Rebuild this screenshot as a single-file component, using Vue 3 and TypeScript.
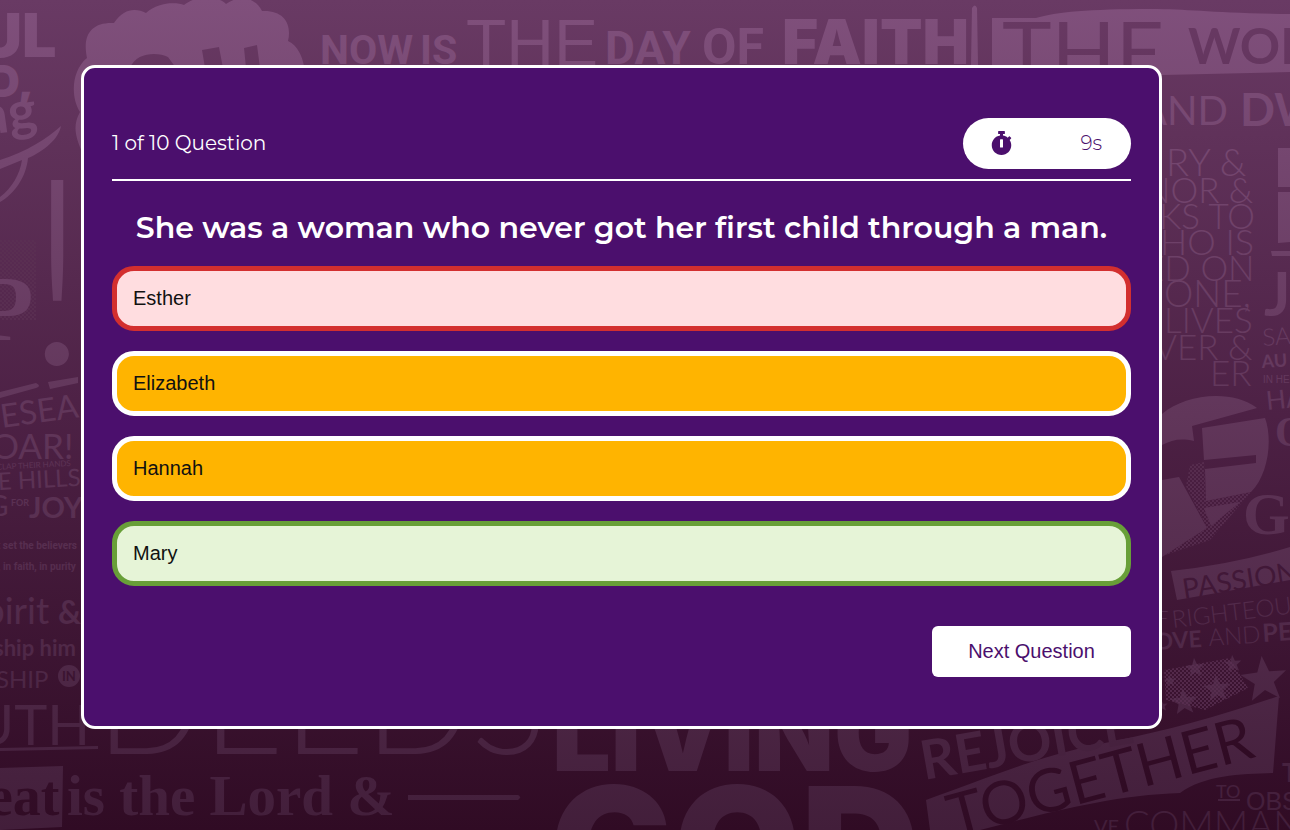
<script setup lang="ts">
import { ref } from 'vue'

type Face = 'sans' | 'heavy' | 'slab' | 'thin' | 'plain' | 'round' | 'black'

interface Word {
  text: string
  x: number
  y: number
  size: number
  face: Face
  turn?: number
  cut?: boolean
}

interface Option {
  label: string
  state: 'wrong' | 'idle' | 'right'
}

const options = ref<Option[]>([
  { label: 'Esther', state: 'wrong' },
  { label: 'Elizabeth', state: 'idle' },
  { label: 'Hannah', state: 'idle' },
  { label: 'Mary', state: 'right' },
])
const current = ref(1)
const total = 10
const seconds = ref(9)

const words: Word[] = [
  { text: 'UL', x: -22, y: 57, size: 61, face: 'black' },
  { text: 'D,', x: -12, y: 97, size: 44, face: 'black' },
  { text: 'ng', x: -20, y: 136, size: 54, face: 'round', turn: -8 },
  { text: 'NOW', x: 320, y: 64, size: 41, face: 'heavy' },
  { text: 'IS', x: 420, y: 64, size: 41, face: 'heavy' },
  { text: 'THE', x: 466, y: 66, size: 66, face: 'sans' },
  { text: 'DAY', x: 605, y: 64, size: 46, face: 'heavy' },
  { text: 'OF', x: 702, y: 64, size: 50, face: 'heavy' },
  { text: 'FAITH', x: 782, y: 64, size: 62, face: 'black' },
  { text: 'THE', x: 1002, y: 82, size: 84, face: 'plain', cut: true },
  { text: 'WORD', x: 1188, y: 64, size: 50, face: 'round', cut: true },
  { text: 'AND', x: 1140, y: 125, size: 40, face: 'plain' },
  { text: 'DW', x: 1240, y: 126, size: 46, face: 'round' },
  { text: 'RY &', x: 1166, y: 176, size: 38, face: 'thin' },
  { text: 'NOR &', x: 1144, y: 203, size: 35, face: 'thin' },
  { text: 'KS TO', x: 1159, y: 229, size: 35, face: 'thin' },
  { text: 'HO IS', x: 1160, y: 255, size: 36, face: 'thin' },
  { text: 'ED ON', x: 1144, y: 281, size: 35, face: 'thin' },
  { text: 'ONE,', x: 1164, y: 307, size: 37, face: 'thin' },
  { text: 'LIVES', x: 1164, y: 333, size: 35, face: 'thin' },
  { text: 'VER &', x: 1154, y: 360, size: 35, face: 'thin' },
  { text: 'ER', x: 1210, y: 386, size: 35, face: 'thin' },
  { text: 'JE', x: 1264, y: 316, size: 62, face: 'round' },
  { text: 'SA', x: 1263, y: 346, size: 24, face: 'thin', turn: -4 },
  { text: 'AU', x: 1262, y: 368, size: 18, face: 'round', turn: -4 },
  { text: 'IN HE', x: 1263, y: 383, size: 10, face: 'sans' },
  { text: 'HA', x: 1267, y: 410, size: 26, face: 'plain', turn: -6 },
  { text: 'O', x: 1275, y: 446, size: 42, face: 'slab' },
  { text: 'Go', x: 1243, y: 534, size: 60, face: 'slab' },
  { text: 'P', x: -24, y: 340, size: 94, face: 'slab' },
  { text: '!', x: 24, y: 364, size: 260, face: 'thin' },
  { text: 'ESEA', x: 2, y: 428, size: 33, face: 'plain', turn: -8 },
  { text: 'OAR!', x: -9, y: 459, size: 35, face: 'plain' },
  { text: 'HILLS CLAP THEIR HANDS', x: -26, y: 471, size: 8, face: 'plain', turn: -3 },
  { text: 'HE HILLS', x: -20, y: 491, size: 24, face: 'plain', turn: -3 },
  { text: 'G', x: -12, y: 516, size: 28, face: 'plain' },
  { text: 'FOR', x: 11, y: 506, size: 9, face: 'round' },
  { text: 'JOY', x: 29, y: 518, size: 29, face: 'round' },
  { text: 't set the believers', x: -3, y: 549, size: 10, face: 'heavy' },
  { text: ', in faith, in purity', x: -2, y: 570, size: 10, face: 'heavy' },
  { text: 'pirit', x: -16, y: 624, size: 37, face: 'plain' },
  { text: '&', x: 58, y: 624, size: 32, face: 'round' },
  { text: 'ship him', x: -6, y: 656, size: 22, face: 'round' },
  { text: 'SHIP', x: -4, y: 688, size: 24, face: 'plain' },
  { text: 'IN', x: 62, y: 681, size: 13, face: 'round', cut: true },
  { text: 'UTH', x: -27, y: 745, size: 56, face: 'plain' },
  { text: 'DEEDS', x: 96, y: 754, size: 140, face: 'thin' },
  { text: 'eat', x: -12, y: 815, size: 56, face: 'slab', cut: true },
  { text: 'is the Lord &', x: 67, y: 815, size: 57, face: 'slab' },
  { text: 'LIVING', x: 552, y: 771, size: 104, face: 'black' },
  { text: 'GOD', x: 550, y: 905, size: 164, face: 'black' },
  { text: 'REJOICE', x: 924, y: 780, size: 54, face: 'round', turn: -10 },
  { text: 'PASSION', x: 1184, y: 599, size: 28, face: 'plain', turn: -9, cut: true },
  { text: 'F', x: 1156, y: 626, size: 22, face: 'thin' },
  { text: 'RIGHTEOUS', x: 1173, y: 628, size: 24, face: 'thin', turn: -7 },
  { text: 'OVE', x: 1155, y: 650, size: 23, face: 'round', turn: -4 },
  { text: 'AND', x: 1209, y: 646, size: 24, face: 'thin', turn: -4 },
  { text: 'PEACE', x: 1263, y: 642, size: 25, face: 'round', turn: -4 },
  { text: 'TOGETHER', x: 954, y: 838, size: 60, face: 'plain', turn: -15, cut: true },
  { text: 'T', x: 1282, y: 782, size: 26, face: 'round' },
  { text: 'TO', x: 1216, y: 798, size: 18, face: 'plain' },
  { text: 'OBS', x: 1246, y: 810, size: 25, face: 'sans' },
  { text: 'VE', x: 1094, y: 834, size: 20, face: 'plain' },
  { text: 'COMMAND', x: 1124, y: 838, size: 38, face: 'thin' },
]

const stars = [
  { x: 1195, y: 668, r: 10 },
  { x: 1233, y: 664, r: 9 },
  { x: 1170, y: 681, r: 6 },
  { x: 1217, y: 689, r: 14 },
  { x: 1184, y: 702, r: 14 },
  { x: 1162, y: 706, r: 6 },
  { x: 1264, y: 680, r: 24 },
]

function starPoints(cx: number, cy: number, r: number): string {
  return Array.from({ length: 10 }, (_, i) => {
    const a = (Math.PI / 5) * i - Math.PI / 2 - 0.1
    const d = i % 2 ? r * 0.42 : r
    return `${(cx + d * Math.cos(a)).toFixed(1)},${(cy + d * Math.sin(a)).toFixed(1)}`
  }).join(' ')
}
</script>

<template>
  <main class="page">
    <svg class="mural" viewBox="0 0 1290 830" preserveAspectRatio="xMidYMid slice" aria-hidden="true">
      <defs>
        <linearGradient id="wall" gradientUnits="userSpaceOnUse" x1="0" y1="0" x2="0" y2="830">
          <stop offset="0" stop-color="#693a64" />
          <stop offset="0.5" stop-color="#4d2145" />
          <stop offset="1" stop-color="#300b24" />
        </linearGradient>
        <linearGradient id="ink" gradientUnits="userSpaceOnUse" x1="0" y1="0" x2="0" y2="830">
          <stop offset="0" stop-color="#80507c" />
          <stop offset="0.5" stop-color="#61365a" />
          <stop offset="1" stop-color="#421e3a" />
        </linearGradient>
        <pattern id="dots" width="4" height="4" patternUnits="userSpaceOnUse">
          <circle cx="1" cy="1" r="1" fill="#5a3053" />
          <circle cx="3" cy="3" r="1" fill="#5a3053" />
        </pattern>
      </defs>
      <rect width="1290" height="830" fill="url(#wall)" />

      <g fill="url(#ink)">
        <path
          d="M82 152C76 138 72 126 80 112C70 96 72 70 87 58C82 34 92 22 114 23C124 8 136 8 146 13C158 2 176 2 184 5C198-6 218-4 226 4C240-6 256-2 262 11C284 10 292 24 288 41C298 46 302 56 304 66V152Z"
        />
        <path d="M992 18H1036C1056 12 1090 9 1150 9C1190 9 1210 13 1290 14V72L1162 75L992 70Z" />
        <path d="M972 8Q975 3 977 8L978 66H971Z" />
        <path d="M1278 148H1290V187H1278ZM1278 192H1290V242L1278 243ZM1271 251H1290V256H1272Z" />
        <path d="M0 392L36 383Q42 386 36 388L0 398ZM48 382L78 377V383L50 389Z" />
        <path d="M0 160C26 152 48 138 61 126C58 142 38 154 28 158C26 178 14 194 0 202V197C12 188 20 174 22 160L0 169Z" />
        <path
          d="M1162 414C1184 395 1230 388 1257 408L1192 426L1194 441C1180 438 1172 440 1162 445ZM1202 428L1265 418C1273 440 1268 475 1251 492L1206 501L1205 469L1256 463V455L1204 460ZM1204 508L1240 502L1211 526ZM1162 480L1179 477L1207 528L1162 557Z"
        />
        <path d="M1171 571Q1235 564 1290 547V580L1177 600Z" />
        <circle cx="69" cy="676" r="11" />
        <path d="M0 748L98 746V749L0 751ZM0 768L63 766L62 827L0 830Z" />
        <path d="M408 795H518Q522 797 518 800H408Z" />
        <path d="M926 800C990 777 1040 755 1110 742C1170 730 1220 716 1279 696L1273 773C1240 774 1205 775 1180 793C1110 795 1040 815 980 830H930Z" />
        <polygon v-for="s in stars" :key="`${s.x}-${s.y}`" :points="starPoints(s.x, s.y, s.r)" />
        <path d="M1218 799H1240V801H1218Z" />
      </g>

      <g fill="url(#wall)">
        <path d="M130 68C136 52 158 52 168 57L176 68ZM202 50L219 47L223 68H205ZM244 48L257 45L260 68H246Z" />
      </g>
      <g fill="url(#dots)">
        <path d="M1190 465L1204 462L1206 501L1251 492L1210 540L1165 555L1207 528L1186 486Z" />
        <path d="M1164 670L1230 658L1248 688L1205 710L1166 700ZM0 240H36V320H0Z" />
      </g>

      <text
        v-for="(w, i) in words"
        :key="i"
        :x="w.x"
        :y="w.y"
        :font-size="w.size"
        :class="['word', w.face]"
        :fill="w.cut ? 'url(#wall)' : 'url(#ink)'"
        :transform="w.turn ? `rotate(${w.turn} ${w.x} ${w.y})` : undefined"
      >{{ w.text }}</text>
    </svg>

    <section class="card" aria-labelledby="question">
      <header class="top">
        <p class="count">{{ current }} of {{ total }} Question</p>
        <div class="timer" role="timer">
          <svg class="watch" viewBox="0 0 448 512" aria-hidden="true">
            <path
              fill="currentColor"
              d="M432 304c0 114.9-93.1 208-208 208S16 418.9 16 304c0-104 76.3-190.2 176-205.5V64h-28c-6.6 0-12-5.4-12-12V12c0-6.6 5.4-12 12-12h120c6.6 0 12 5.4 12 12v40c0 6.6-5.4 12-12 12h-28v34.5c37.5 5.8 71.7 21.6 99.7 44.6l27.5-27.5c4.7-4.7 12.3-4.7 17 0l28.3 28.3c4.7 4.7 4.7 12.3 0 17l-29.4 29.4-.6.6C419.7 223.3 432 262.2 432 304zm-176 36V188.5c0-6.6-5.4-12-12-12h-40c-6.6 0-12 5.4-12 12V340c0 6.6 5.4 12 12 12h40c6.6 0 12-5.4 12-12z"
            />
          </svg>
          <span>{{ seconds }}s</span>
        </div>
      </header>

      <h1 id="question" class="question">She was a woman who never got her first child through a man.</h1>

      <div class="options">
        <button v-for="o in options" :key="o.label" type="button" :class="['option', o.state]">{{ o.label }}</button>
      </div>

      <footer class="actions">
        <button type="button" class="next">Next Question</button>
      </footer>
    </section>
  </main>
</template>

<style>
body {
  background: #300b24;
}
</style>

<style scoped>
.page {
  position: relative;
  box-sizing: border-box;
  min-height: 100vh;
  padding: 65px 128px 65px 81px;
  overflow: hidden;
}

.mural {
  position: absolute;
  inset: 0;
  width: 100%;
  height: 100%;
}

.word {
  white-space: pre;
}

.sans {
  font-family: 'Liberation Sans', sans-serif;
}

.heavy {
  font-family: Roboto, sans-serif;
  font-weight: 700;
}

.slab {
  font-family: 'Liberation Serif', serif;
  font-weight: 700;
}

.thin {
  font-family: Lato, sans-serif;
  font-weight: 300;
}

.plain {
  font-family: Lato, sans-serif;
  font-weight: 400;
}

.round {
  font-family: Lato, sans-serif;
  font-weight: 700;
}

.black {
  font-family: Inter, sans-serif;
  font-weight: 900;
}

.card {
  position: relative;
  box-sizing: border-box;
  padding: 50px 28px 49px;
  border: 3px solid #fff;
  border-radius: 14px;
  background: #4b0f6d;
  color: #fff;
}

.top {
  display: flex;
  align-items: center;
  justify-content: space-between;
  padding-bottom: 10px;
  border-bottom: 2px solid #fff;
}

.count {
  margin: 0;
  padding-bottom: 2px;
  font: 400 20px/24px Montserrat, Inter, sans-serif;
}

.timer {
  display: flex;
  align-items: center;
  justify-content: space-between;
  box-sizing: border-box;
  width: 168px;
  height: 51px;
  padding: 0 29px 2px 28px;
  border-radius: 26px;
  background: #fff;
  color: #4b0f6d;
  font: 300 20px/24px Montserrat, Inter, sans-serif;
}

.watch {
  width: 21px;
  height: 24px;
}

.question {
  margin: 27px 0 18px;
  text-align: center;
  font: 600 30px/40px Montserrat, Inter, sans-serif;
}

.options {
  display: grid;
  gap: 20px;
}

.option {
  height: 65px;
  padding: 0 16px 2px;
  border: 5px solid #fff;
  border-radius: 22px;
  background: #ffb400;
  color: #111;
  text-align: left;
  font: 400 20px/24px 'Liberation Sans', sans-serif;
  cursor: pointer;
}

.wrong {
  border-color: #d32f2f;
  background: #ffdde0;
}

.right {
  border-color: #689f38;
  background: #e6f4d7;
}

.actions {
  display: flex;
  justify-content: flex-end;
  margin-top: 40px;
}

.next {
  width: 199px;
  height: 51px;
  padding: 0 0 2px;
  border: 0;
  border-radius: 6px;
  background: #fff;
  color: #4b0f6d;
  font: 400 20px/24px 'Liberation Sans', sans-serif;
  cursor: pointer;
}
</style>
